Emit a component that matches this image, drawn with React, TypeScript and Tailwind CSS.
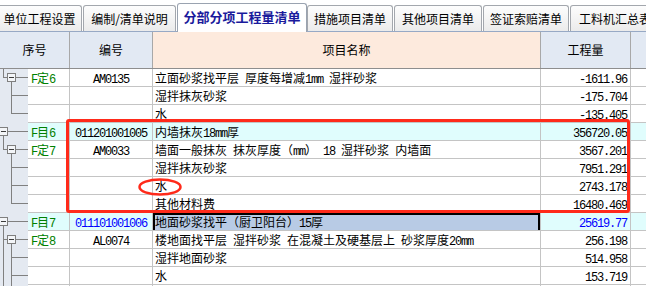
import React from "react"

type Row = {
  code?: string
  bh?: string
  name: string
  qty: string
  qd?: boolean
  sel?: boolean
}

const rows: Row[] = [
  { code: "F定6", bh: "AM0135", name: "立面砂浆找平层 厚度每增减1mm 湿拌砂浆", qty: "-1611.96" },
  { name: "湿拌抹灰砂浆", qty: "-175.704" },
  { name: "水", qty: "-135.405" },
  { code: "F目6", bh: "011201001005", name: "内墙抹灰18mm厚", qty: "356720.05", qd: true },
  { code: "F定7", bh: "AM0033", name: "墙面一般抹灰 抹灰厚度（mm） 18 湿拌砂浆 内墙面", qty: "3567.201" },
  { name: "湿拌抹灰砂浆", qty: "7951.291" },
  { name: "水", qty: "2743.178" },
  { name: "其他材料费", qty: "16480.469" },
  { code: "F目7", bh: "011101001006", name: "地面砂浆找平（厨卫阳台）15厚", qty: "25619.77", qd: true, sel: true },
  { code: "F定8", bh: "AL0074", name: "楼地面找平层 湿拌砂浆 在混凝土及硬基层上 砂浆厚度20mm", qty: "256.198" },
  { name: "湿拌地面砂浆", qty: "514.958" },
  { name: "水", qty: "153.719" },
  { name: "", qty: "" },
]

const tabs = [
  { label: "单位工程设置", w: "w-[85px] ml-[-3px]" },
  { label: "编制/清单说明", w: "w-[93px] ml-[1px]" },
  { label: "分部分项工程量清单", w: "w-[130px] ml-[1px]", active: true },
  { label: "措施项目清单", w: "w-[86px]" },
  { label: "其他项目清单", w: "w-[88px] ml-[1px]" },
  { label: "签证索赔清单", w: "w-[86px] ml-[1px]" },
  { label: "工料机汇总表", w: "w-[90px] ml-[1px]" },
]

// ASCII runs get a mono face squeezed to half the CJK width
function Mixed({ s }: { s: string }) {
  return (
    <>
      {s
        .split(/([\x20-\x7e]+)/)
        .filter(Boolean)
        .map((p, i) =>
          /^[\x20-\x7e]+$/.test(p) ? (
            <span key={i} className="font-['Liberation_Mono',monospace] text-[12px] tracking-[-1.2px] whitespace-pre">
              {p}
            </span>
          ) : (
            <span key={i}>{p}</span>
          )
        )}
    </>
  )
}

function Box({ x, y }: { x: number; y: number }) {
  return (
    <g>
      <rect x={x + 0.5} y={y + 0.5} width={8} height={8} fill="#f3f5f8" stroke="#7f7f7f" />
      <line x1={x + 2} y1={y + 4.5} x2={x + 7} y2={y + 4.5} stroke="#3c3c3c" />
    </g>
  )
}

function Tree() {
  const c = (i: number) => 18 * i + 8.5
  const g = "#808080"
  return (
    <svg width="28" height={18 * 13} className="block" shapeRendering="crispEdges">
      <g stroke={g} strokeWidth="1" fill="none">
        {/* F定6 */}
        <line x1="3.5" y1="0" x2="3.5" y2={c(0)} />
        <line x1="3.5" y1={c(0)} x2="7" y2={c(0)} />
        <line x1="16" y1={c(0)} x2="28" y2={c(0)} />
        <line x1="11.5" y1="13" x2="11.5" y2={c(2)} />
        <line x1="11.5" y1={c(1)} x2="28" y2={c(1)} />
        <line x1="11.5" y1={c(2)} x2="28" y2={c(2)} />
        {/* F目6 */}
        <line x1="8" y1={c(3)} x2="28" y2={c(3)} />
        <line x1="3.5" y1={c(3) + 4} x2="3.5" y2={c(4)} />
        <line x1="3.5" y1={c(4)} x2="7" y2={c(4)} />
        {/* F定7 */}
        <line x1="16" y1={c(4)} x2="28" y2={c(4)} />
        <line x1="11.5" y1={c(4) + 4} x2="11.5" y2={c(7)} />
        <line x1="11.5" y1={c(5)} x2="28" y2={c(5)} />
        <line x1="11.5" y1={c(6)} x2="28" y2={c(6)} />
        <line x1="11.5" y1={c(7)} x2="28" y2={c(7)} />
        {/* F目7 */}
        <line x1="8" y1={c(8)} x2="28" y2={c(8)} />
        <line x1="3.5" y1={c(8) + 4} x2="3.5" y2={18 * 13} />
        <line x1="3.5" y1={c(9)} x2="7" y2={c(9)} />
        {/* F定8 */}
        <line x1="16" y1={c(9)} x2="28" y2={c(9)} />
        <line x1="11.5" y1={c(9) + 4} x2="11.5" y2={18 * 13} />
        <line x1="11.5" y1={c(10)} x2="28" y2={c(10)} />
        <line x1="11.5" y1={c(11)} x2="28" y2={c(11)} />
      </g>
      <Box x={7} y={4} />
      <Box x={-1} y={58} />
      <Box x={7} y={76} />
      <Box x={-1} y={148} />
      <Box x={7} y={166} />
    </svg>
  )
}

export default function App() {
  return (
    <div className="relative w-[646px] h-[286px] overflow-hidden bg-white text-[12px] text-black font-['Noto_Sans_CJK_SC',sans-serif]">
      {/* Tabs */}
      <div className="flex items-end h-[32px] border-b border-[#97a9c5] bg-white">
        {tabs.map((t) =>
          t.active ? (
            <div
              key={t.label}
              className={`${t.w} relative z-10 h-[29px] mb-[-1px] shrink-0 flex items-center justify-center bg-white border border-b-0 border-[#9aa3b0] rounded-t-[3px] text-[13px] font-bold text-[#1a1a9c] pb-[2px]`}
            >
              {t.label}
            </div>
          ) : (
            <div
              key={t.label}
              className={`${t.w} h-[26px] shrink-0 flex items-center justify-center bg-linear-to-b from-[#fdfdfd] to-[#ebebeb] border border-b-0 border-[#a3a7ad] rounded-t-[3px] whitespace-nowrap`}
            >
              {t.label}
            </div>
          )
        )}
      </div>

      {/* Header */}
      <div className="flex h-[37px] border-b border-[#8e8e8e]">
        <div className="w-[70px] shrink-0 flex items-center justify-center bg-[#e2e9f3] border-r border-[#a8a8a8]">序号</div>
        <div className="w-[83px] shrink-0 flex items-center justify-center bg-[#e2e9f3] border-r border-[#a8a8a8]">编号</div>
        <div className="w-[388px] shrink-0 flex items-center justify-center bg-[#fdeadd] border-r border-[#a8a8a8]">项目名称</div>
        <div className="w-[90px] shrink-0 flex items-center justify-center bg-[#e2e9f3] border-r border-[#a8a8a8]">工程量</div>
        <div className="flex-1 bg-[#e2e9f3]" />
      </div>

      {/* Body */}
      <div className="flex">
        <div className="w-[28px] shrink-0 bg-[#e4e9f1]">
          <Tree />
        </div>
        <div className="flex-1">
          {rows.map((r, i) => {
            const bg = r.qd ? "bg-[#e0fdfd]" : "bg-white"
            return (
              <div key={i} className={`flex h-[18px] leading-[17px] border-b border-[#c4c4c4] ${bg}`}>
                <div className="w-[42px] shrink-0 pl-[3px] border-r border-[#c4c4c4] text-[#008000] whitespace-nowrap">
                  {r.code && <Mixed s={r.code} />}
                </div>
                <div
                  className={`w-[83px] shrink-0 text-center border-r border-[#c4c4c4] whitespace-nowrap ${r.sel ? "text-[#0000ff]" : ""}`}
                >
                  {r.bh && <Mixed s={r.bh} />}
                </div>
                <div
                  className={`relative w-[388px] shrink-0 pl-[2px] border-r border-[#c4c4c4] whitespace-nowrap overflow-hidden ${r.sel ? "bg-[#b8cbe5]" : ""}`}
                >
                  {r.sel && <div className="absolute left-0 top-0 right-0 h-[19px] border-2 border-black" />}
                  <span className="relative">
                    <Mixed s={r.name} />
                  </span>
                </div>
                <div
                  className={`w-[90px] shrink-0 pr-[3px] text-right border-r border-[#c4c4c4] whitespace-nowrap ${r.sel ? "text-[#0000ff]" : ""}`}
                >
                  {r.qty && <Mixed s={r.qty} />}
                </div>
                <div className="flex-1" />
              </div>
            )
          })}
        </div>
      </div>

      {/* Red annotations */}
      <div className="absolute left-[66px] top-[119px] w-[564px] h-[94px] border-[3px] border-[#ff2a1a] rounded-[3px] pointer-events-none" />
      <svg className="absolute left-[137px] top-[177px] pointer-events-none" width="46" height="20">
        <ellipse cx="23" cy="10" rx="20.5" ry="7.5" fill="none" stroke="#ff2a1a" strokeWidth="2.5" />
      </svg>
    </div>
  )
}
